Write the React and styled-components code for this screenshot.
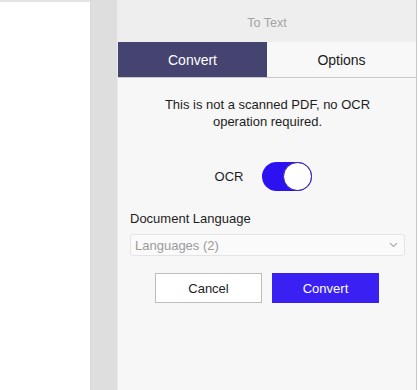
import React from 'react';
import styled, { createGlobalStyle } from "styled-components";

const GlobalStyle = createGlobalStyle`
    html, body {
        margin: 0;
        padding: 0;
        background: #ffffff;
        font-family: 'Liberation Sans', Arial, sans-serif;
    }
`;

const Page = styled.div`
    display: flex;
    width: 419px;
    height: 390px;
    overflow: hidden;
`;

const Document = styled.div`
    width: 90px;
    background: #ffffff;
    border-top: 2px solid #e4e4e4;
`;

const Gutter = styled.div`
    width: 26px;
    background: #dedede;
    border-right: 1px solid #ebebeb;
    border-left: 1px solid #d8d8d8;
`;

const Panel = styled.div`
    width: 298px;
    display: flex;
    flex-direction: column;
    background: #f7f7f7;
    border-right: 1px solid #c9c9c9;
`;

const Header = styled.div`
    height: 42px;
    display: flex;
    align-items: center;
    justify-content: center;
    padding-top: 3px;
    box-sizing: border-box;
    background: #eeeeee;
    color: #a3a3a3;
    font-size: 12.5px;
`;

const Tabs = styled.div`
    display: flex;
    height: 35px;
    border-bottom: 1px solid #c8c8c8;
`;

const Tab = styled.div`
    flex: 1;
    display: flex;
    align-items: center;
    justify-content: center;
    font-size: 14px;
    background: ${p => (p.$active ? "#45436f" : "#f8f8f8")};
    color: ${p => (p.$active ? "#ffffff" : "#1c1c1c")};
`;

const Body = styled.div`
    display: flex;
    flex-direction: column;
    padding: 18px 11px 0 12px;
`;

const Message = styled.div`
    text-align: center;
    font-size: 13px;
    line-height: 17px;
    color: #1d1d1d;
    padding: 0 30px;
`;

const OcrRow = styled.div`
    display: flex;
    align-items: center;
    justify-content: center;
    gap: 19px;
    margin-top: 32px;
    font-size: 13px;
    color: #1d1d1d;
    padding-right: 8px;
`;

const Toggle = styled.div`
    width: 50px;
    height: 29px;
    border-radius: 15px;
    background: #2c12f0;
    display: flex;
    justify-content: flex-end;
    box-sizing: border-box;
`;

const Knob = styled.div`
    width: 29px;
    height: 29px;
    border-radius: 50%;
    background: #ffffff;
    border: 1.5px solid #2c1fa8;
    box-sizing: border-box;
`;

const Label = styled.div`
    margin-top: 20px;
    font-size: 13px;
    color: #1d1d1d;
`;

const Select = styled.div`
    margin-top: 8px;
    height: 20px;
    display: flex;
    align-items: center;
    justify-content: space-between;
    padding: 0 6px 0 4px;
    border: 1px solid #e4e4e4;
    border-radius: 3px;
    background: #fafafa;
    color: #9a9a9a;
    font-size: 13px;
`;

const Buttons = styled.div`
    display: flex;
    justify-content: center;
    gap: 10px;
    margin-top: 17px;
    padding-right: 1px;
`;

const Button = styled.button`
    width: 107px;
    height: 30px;
    font-family: 'Liberation Sans', Arial, sans-serif;
    font-size: 13px;
    border: 1px solid ${p => (p.$primary ? "#3a20f2" : "#bdbdbd")};
    background: ${p => (p.$primary ? "#3a20f2" : "#ffffff")};
    color: ${p => (p.$primary ? "#ffffff" : "#1d1d1d")};
    padding: 0;
`;

function Chevron() {
    return (
        <svg width="9" height="6" viewBox="0 0 9 6">
            <path d="M1 1.2 L4.5 4.5 L8 1.2" fill="none" stroke="#a8a8a8" strokeWidth="1.1" />
        </svg>
    );
}

export default function App() {
    return (
        <Page>
            <GlobalStyle/>
            <Document/>
            <Gutter/>
            <Panel>
                <Header>To Text</Header>
                <Tabs>
                    <Tab $active>Convert</Tab>
                    <Tab>Options</Tab>
                </Tabs>
                <Body>
                    <Message>This is not a scanned PDF, no OCR operation required.</Message>
                    <OcrRow>
                        OCR
                        <Toggle><Knob/></Toggle>
                    </OcrRow>
                    <Label>Document Language</Label>
                    <Select>
                        Languages (2)
                        <Chevron/>
                    </Select>
                    <Buttons>
                        <Button>Cancel</Button>
                        <Button $primary>Convert</Button>
                    </Buttons>
                </Body>
            </Panel>
        </Page>
    );
}
